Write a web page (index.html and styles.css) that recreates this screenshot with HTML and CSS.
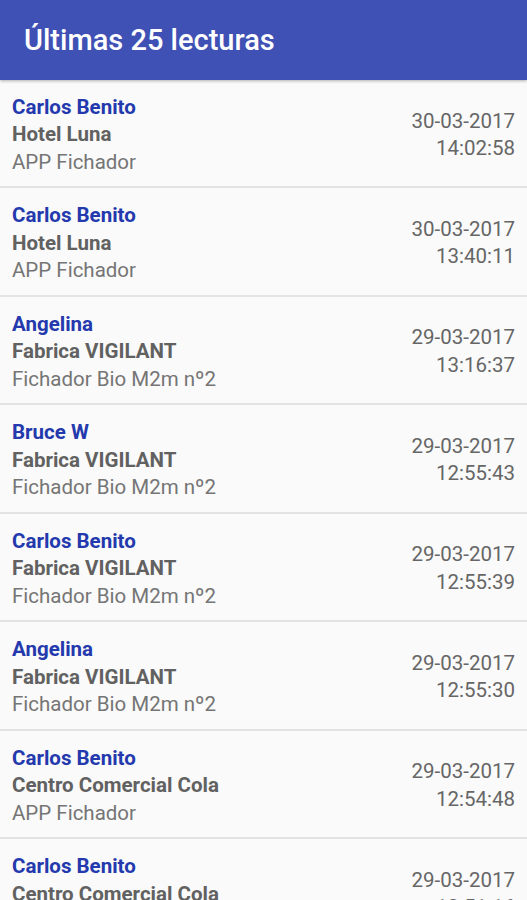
FILE: index.html
```html
<!DOCTYPE html>
<html lang="es">
<head>
<meta charset="UTF-8">
<meta name="viewport" content="width=device-width, initial-scale=1.0">
<title>Últimas 25 lecturas</title>
<link rel="stylesheet" href="styles.css">
</head>
<body>
  <header class="toolbar">
    <h1>Últimas 25 lecturas</h1>
  </header>
  <ul class="readings">
    <li class="reading">
      <div class="who">
        <div class="name">Carlos Benito</div>
        <div class="place">Hotel Luna</div>
        <div class="device">APP Fichador</div>
      </div>
      <div class="when">30-03-2017<br>14:02:58</div>
    </li>
    <li class="reading">
      <div class="who">
        <div class="name">Carlos Benito</div>
        <div class="place">Hotel Luna</div>
        <div class="device">APP Fichador</div>
      </div>
      <div class="when">30-03-2017<br>13:40:11</div>
    </li>
    <li class="reading">
      <div class="who">
        <div class="name">Angelina</div>
        <div class="place">Fabrica VIGILANT</div>
        <div class="device">Fichador Bio M2m nº2</div>
      </div>
      <div class="when">29-03-2017<br>13:16:37</div>
    </li>
    <li class="reading">
      <div class="who">
        <div class="name">Bruce W</div>
        <div class="place">Fabrica VIGILANT</div>
        <div class="device">Fichador Bio M2m nº2</div>
      </div>
      <div class="when">29-03-2017<br>12:55:43</div>
    </li>
    <li class="reading">
      <div class="who">
        <div class="name">Carlos Benito</div>
        <div class="place">Fabrica VIGILANT</div>
        <div class="device">Fichador Bio M2m nº2</div>
      </div>
      <div class="when">29-03-2017<br>12:55:39</div>
    </li>
    <li class="reading">
      <div class="who">
        <div class="name">Angelina</div>
        <div class="place">Fabrica VIGILANT</div>
        <div class="device">Fichador Bio M2m nº2</div>
      </div>
      <div class="when">29-03-2017<br>12:55:30</div>
    </li>
    <li class="reading">
      <div class="who">
        <div class="name">Carlos Benito</div>
        <div class="place">Centro Comercial Cola</div>
        <div class="device">APP Fichador</div>
      </div>
      <div class="when">29-03-2017<br>12:54:48</div>
    </li>
    <li class="reading">
      <div class="who">
        <div class="name">Carlos Benito</div>
        <div class="place">Centro Comercial Cola</div>
        <div class="device">APP Fichador</div>
      </div>
      <div class="when">29-03-2017<br>12:51:16</div>
    </li>
  </ul>
</body>
</html>
```
FILE: styles.css
```css
body {
  font-family: Roboto, "Noto Sans", sans-serif;
  margin: 0;
  padding: 0;
  background-color: #fafafa;
  overflow: hidden;
}
.toolbar {
  position: relative;
  z-index: 1;
  height: 80px;
  display: flex;
  align-items: center;
  padding: 0 24px;
  background-color: #3f51b5;
  box-shadow: 0 1px 3px rgba(0, 0, 0, 0.3);
}
.toolbar h1 {
  margin: 0;
  font-size: 29px;
  font-weight: 500;
  color: #fff;
}
.readings {
  list-style: none;
  margin: 0;
  padding: 0;
}
.reading {
  display: flex;
  align-items: center;
  justify-content: space-between;
  height: 102.5px;
  padding: 4px 12px 0;
  border-bottom: 2px solid #e3e3e3;
  font-size: 20.5px;
  line-height: 27.5px;
}
.reading:first-child {
  height: 102px;
}
.name {
  font-weight: bold;
  color: #2339ad;
}
.place {
  font-weight: bold;
  color: #616161;
}
.device {
  color: #757575;
}
.when {
  text-align: right;
  color: #666;
}
```
